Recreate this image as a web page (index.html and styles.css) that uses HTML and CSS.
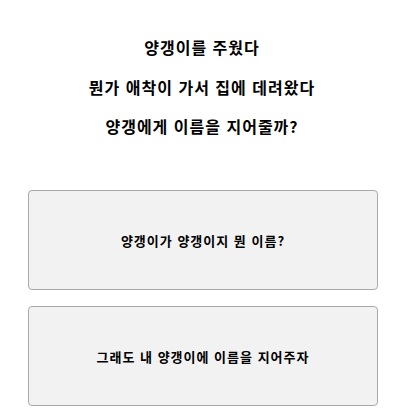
FILE: index.html
```html
<!DOCTYPE html>
<html lang="ko">
<head>
  <meta charset="UTF-8" />
  <title>양갱이</title>
  <link rel="stylesheet" href="styles.css">
</head>
<body>

  <!-- Story -->
  <div class="story">
    <p>양갱이를 주웠다</p>
    <p>뭔가 애착이 가서 집에 데려왔다</p>
    <p>양갱에게 이름을 지어줄까?</p>
  </div>

  <!-- Choices -->
  <div class="choices">
    <button type="button" class="choice">양갱이가 양갱이지 뭔 이름?</button>
    <button type="button" class="choice">그래도 내 양갱이에 이름을 지어주자</button>
  </div>

</body>
</html>
```

FILE: styles.css
```css
body {
  font-family: "Noto Sans CJK KR", "Liberation Sans", sans-serif;
  margin: 0;
  padding: 37px 0 0;
  color: #000;
  letter-spacing: 1px;
}
.story {
  display: flex;
  flex-direction: column;
  align-items: center;
  gap: 19.5px;
}
.story p {
  margin: 0;
  font-size: 16px;
  font-weight: bold;
  line-height: 20px;
}
.choices {
  display: flex;
  flex-direction: column;
  gap: 16px;
  width: 350px;
  margin: 54px auto 0 28px;
}
.choice {
  height: 100px;
  background-color: #f2f2f2;
  border: 1px solid #aaa;
  border-radius: 4px;
  font-family: inherit;
  font-size: 13px;
  font-weight: bold;
  letter-spacing: 1px;
  color: #000;
  cursor: pointer;
}
.choice:hover {
  background-color: #e8e8e8;
}
```
